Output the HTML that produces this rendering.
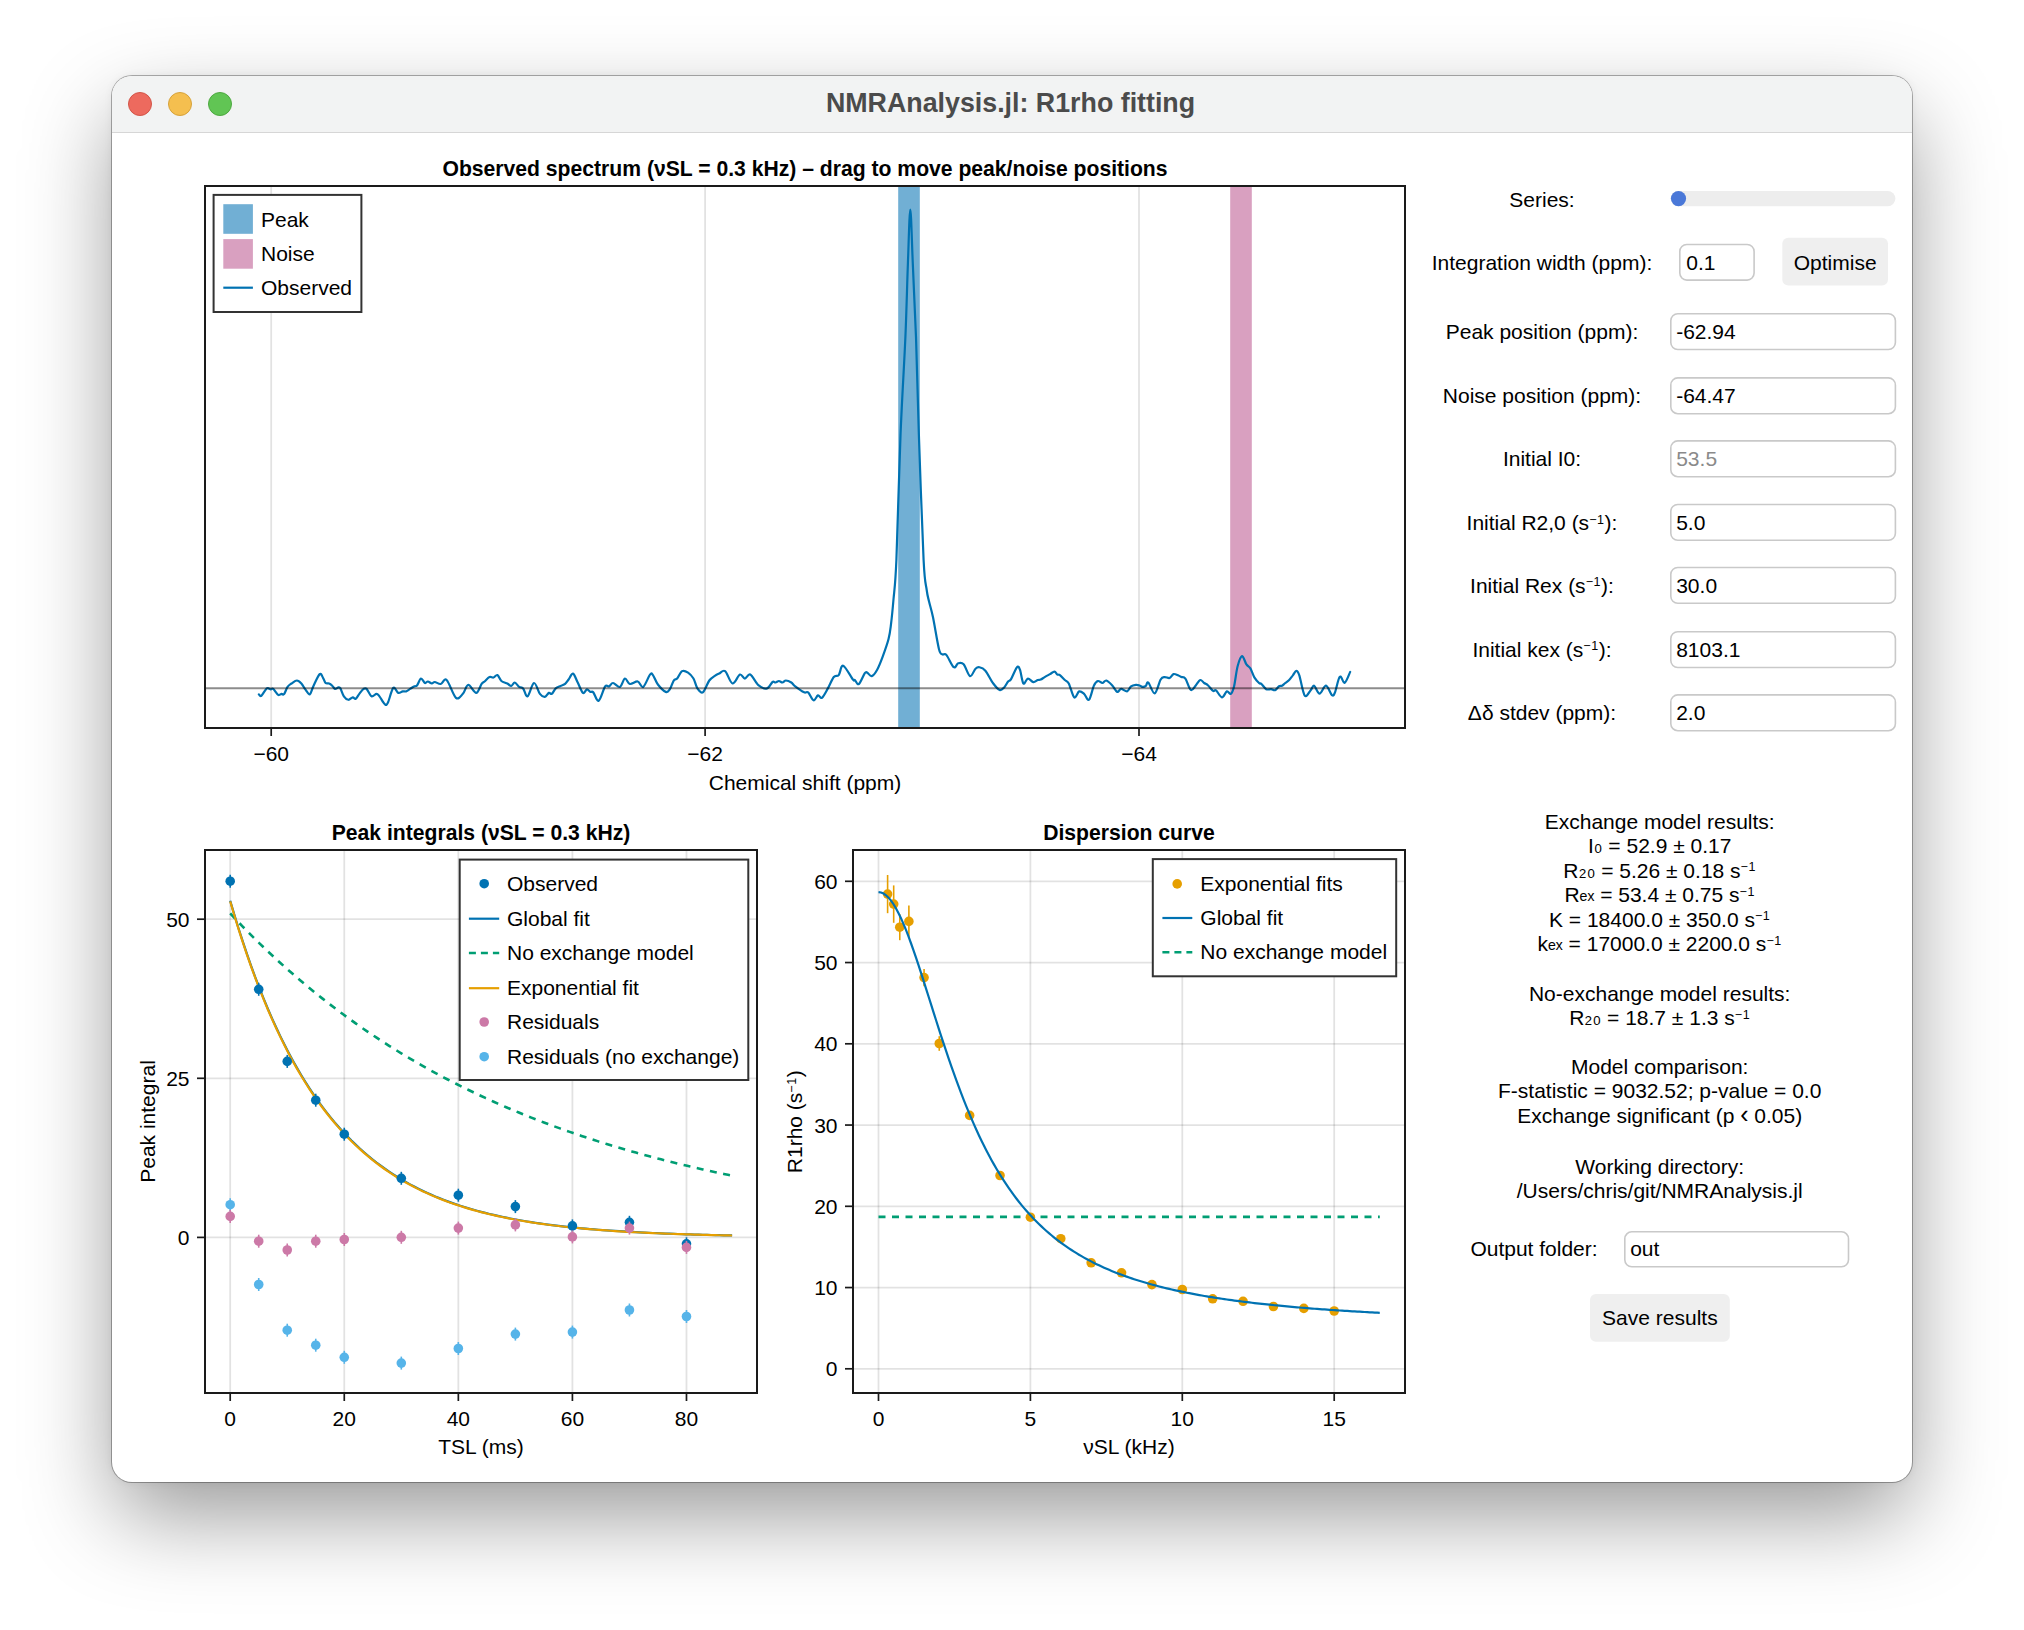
<!DOCTYPE html><html><head><meta charset="utf-8"><style>
html,body{margin:0;padding:0;background:#fff;}body{width:2024px;height:1630px;position:relative;overflow:hidden;font-family:"Liberation Sans", sans-serif;}
.win{position:absolute;left:112px;top:75.5px;width:1800px;height:1406.5px;border-radius:20px;background:#fff;box-shadow:0 0 0 1px rgba(0,0,0,0.30),0 36px 90px -4px rgba(0,0,0,0.41),0 0 10px rgba(0,0,0,0.06);overflow:hidden}
.tb{position:absolute;left:0;top:0;width:100%;height:57px;background:#f2f3f3;border-bottom:1px solid #d6d6d6;box-sizing:border-box}
.tl{position:absolute;top:16px;width:24px;height:24px;border-radius:50%;box-sizing:border-box}
svg{position:absolute;left:0;top:0}
</style></head><body>
<div class="win"><div class="tb">
<div class="tl" style="left:16px;background:#ed6a5e;border:1px solid #d25548"></div>
<div class="tl" style="left:56px;background:#f5bf4f;border:1px solid #d6a23b"></div>
<div class="tl" style="left:96px;background:#61c554;border:1px solid #4ea840"></div>
</div></div>
<svg width="2024" height="1630" viewBox="0 0 2024 1630" style="font-family:"Liberation Sans", sans-serif">
<text x="1010.5" y="111.8" text-anchor="middle" font-weight="bold" font-size="26.8" fill="#4b4b4b">NMRAnalysis.jl: R1rho fitting</text>
<text x="805" y="175.5" text-anchor="middle" font-weight="bold" font-size="21.15" fill="#000">Observed spectrum (νSL = 0.3 kHz) – drag to move peak/noise positions</text>
<line x1="271.2" y1="186" x2="271.2" y2="728" stroke="rgba(0,0,0,0.115)" stroke-width="1.8"/>
<line x1="705.1" y1="186" x2="705.1" y2="728" stroke="rgba(0,0,0,0.115)" stroke-width="1.8"/>
<line x1="1139" y1="186" x2="1139" y2="728" stroke="rgba(0,0,0,0.115)" stroke-width="1.8"/>
<rect x="898.2" y="186" width="21.6" height="542" fill="#71afd4"/>
<rect x="1230.2" y="186" width="21.6" height="542" fill="#d9a0c0"/>
<path d="M258.89 694.35 C259.31 694.59 260.05 696.82 261.36 695.83 C262.68 694.84 265.23 689.49 266.8 688.42 C268.36 687.35 269.68 689.32 270.75 689.41 C271.82 689.49 271.99 688.01 273.22 688.91 C274.46 689.82 276.76 694.02 278.16 694.84 C279.56 695.67 280.63 693.97 281.62 693.85 C282.61 693.74 283.1 695.3 284.09 694.15 C285.08 693 286.31 688.72 287.55 686.94 C288.78 685.16 289.94 684.55 291.5 683.48 C293.07 682.41 295.29 680.51 296.94 680.51 C298.58 680.51 299.98 682 301.38 683.48 C302.78 684.96 303.94 687.6 305.34 689.41 C306.74 691.22 308.47 694.84 309.78 694.35 C311.1 693.85 311.59 689.82 313.24 686.44 C314.89 683.07 318.02 675.49 319.66 674.09 C321.31 672.69 322.13 676.56 323.12 678.04 C324.11 679.53 324.6 682.08 325.59 682.98 C326.58 683.89 327.98 683.07 329.05 683.48 C330.12 683.89 331.03 684.55 332.02 685.45 C333 686.36 333.91 688.58 334.98 688.91 C336.05 689.24 337.53 687.51 338.44 687.43 C339.34 687.35 339.51 686.94 340.42 688.42 C341.32 689.9 342.56 694.43 343.87 696.32 C345.19 698.22 346.84 699.62 348.32 699.78 C349.8 699.95 351.53 697.48 352.77 697.31 C354 697.15 354.58 699.45 355.73 698.79 C356.88 698.14 358.37 695.01 359.68 693.36 C361 691.71 362.48 689.65 363.64 688.91 C364.79 688.17 365.28 687.68 366.6 688.91 C367.92 690.15 369.89 695.5 371.54 696.32 C373.19 697.15 375.16 693.85 376.48 693.85 C377.8 693.85 378.05 694.59 379.45 696.32 C380.85 698.05 383.48 703.16 384.88 704.23 C386.28 705.3 386.45 705.46 387.85 702.75 C389.25 700.03 391.55 689.57 393.28 687.92 C395.01 686.28 396.66 692.29 398.22 692.87 C399.79 693.44 401.35 691.63 402.67 691.38 C403.99 691.14 404.89 691.8 406.13 691.38 C407.36 690.97 408.76 689.74 410.08 688.91 C411.4 688.09 412.88 687.02 414.03 686.44 C415.18 685.87 415.84 686.77 417 685.45 C418.15 684.14 419.63 678.95 420.95 678.54 C422.27 678.13 423.75 682.49 424.9 682.98 C426.05 683.48 426.71 681.42 427.87 681.5 C429.02 681.58 430.67 683.4 431.82 683.48 C432.97 683.56 433.3 681.91 434.78 682 C436.26 682.08 438.74 684.3 440.71 683.97 C442.69 683.64 444.1 677.71 446.64 680.02 C449.18 682.33 453.23 695.5 455.93 697.81 C458.63 700.11 460.79 695.99 462.85 693.85 C464.9 691.71 466.06 685.13 468.28 684.96 C470.5 684.8 473.96 693.03 476.19 692.87 C478.41 692.7 480.22 685.87 481.62 683.97 C483.02 682.08 483.27 682.65 484.58 681.5 C485.9 680.35 488.04 677.71 489.53 677.06 C491.01 676.4 492.16 677.88 493.48 677.55 C494.8 677.22 496.11 674.5 497.43 675.08 C498.75 675.66 499.74 679.61 501.38 681.01 C503.03 682.41 505.67 682.65 507.31 683.48 C508.96 684.3 510.03 686.11 511.26 685.95 C512.5 685.78 513.41 682.33 514.72 682.49 C516.04 682.65 517.77 685.95 519.17 686.94 C520.57 687.92 521.72 686.85 523.12 688.42 C524.52 689.98 525.76 697.23 527.57 696.32 C529.38 695.42 531.93 683.4 533.99 682.98 C536.05 682.57 538.11 691.55 539.92 693.85 C541.73 696.16 543.38 696.98 544.86 696.82 C546.34 696.65 547.66 693.36 548.81 692.87 C549.97 692.37 550.63 694.59 551.78 693.85 C552.93 693.11 554.25 689.74 555.73 688.42 C557.21 687.1 559.11 686.69 560.67 685.95 C562.24 685.21 563.8 685.04 565.12 683.97 C566.44 682.9 567.26 681.25 568.58 679.53 C569.89 677.8 571.54 673.19 573.02 673.6 C574.51 674.01 575.82 678.78 577.47 682 C579.12 685.21 581.34 691.63 582.91 692.87 C584.47 694.1 585.62 689.57 586.86 689.41 C588.09 689.24 589.25 691.38 590.32 691.88 C591.39 692.37 591.88 690.89 593.28 692.37 C594.68 693.85 596.74 701.76 598.72 700.77 C600.69 699.78 603.41 688.83 605.14 686.44 C606.87 684.05 607.77 687.02 609.09 686.44 C610.41 685.87 611.23 682.9 613.04 682.98 C614.86 683.07 617.98 687.68 619.96 686.94 C621.94 686.2 623.25 679.03 624.9 678.54 C626.55 678.04 627.7 683.48 629.84 683.97 C631.98 684.47 635.52 681.01 637.75 681.5 C639.97 682 641.14 688.09 643.18 686.94 C645.22 685.78 648.37 676.56 650 674.58 C651.63 672.61 651.65 673.43 652.96 675.08 C654.28 676.73 655.76 681.67 657.91 684.47 C660.05 687.27 663.83 691.05 665.81 691.88 C667.79 692.7 668.45 691.3 669.76 689.41 C671.08 687.51 672.48 682.33 673.72 680.51 C674.95 678.7 675.77 680.1 677.17 678.54 C678.57 676.97 680.3 672.11 682.11 671.13 C683.93 670.14 686.15 671.37 688.04 672.61 C689.94 673.84 691.91 675.9 693.48 678.54 C695.04 681.17 695.87 686.11 697.43 688.42 C699 690.72 700.89 693.69 702.87 692.37 C704.84 691.05 707.23 683.31 709.29 680.51 C711.35 677.71 713.57 676.73 715.22 675.57 C716.86 674.42 717.52 674.34 719.17 673.6 C720.82 672.86 722.88 669.48 725.1 671.13 C727.32 672.77 730.04 682.9 732.51 683.48 C734.98 684.05 737.86 675.41 739.92 674.58 C741.98 673.76 743.13 678.54 744.86 678.54 C746.59 678.54 747.99 673.43 750.3 674.58 C752.6 675.74 755.9 683.15 758.7 685.45 C761.5 687.76 764.79 689 767.09 688.42 C769.4 687.84 771.13 682.98 772.53 682 C773.93 681.01 774.42 682.65 775.49 682.49 C776.56 682.33 777.8 681.01 778.95 681.01 C780.11 681.01 781.26 682.57 782.41 682.49 C783.56 682.41 784.39 680.51 785.87 680.51 C787.35 680.51 789.74 681.5 791.3 682.49 C792.87 683.48 793.12 684.8 795.26 686.44 C797.4 688.09 802.01 691.38 804.15 692.37 C806.29 693.36 806.54 691.05 808.1 692.37 C809.67 693.69 811.89 699.78 813.54 700.28 C815.18 700.77 816.58 695.75 817.98 695.34 C819.38 694.92 820.29 698.96 821.94 697.81 C823.58 696.65 825.89 691.88 827.87 688.42 C829.84 684.96 831.98 679.28 833.79 677.06 C835.61 674.83 837.17 676.97 838.74 675.08 C840.3 673.19 840.81 664.94 843.18 665.69 C845.55 666.44 851 677.17 852.96 679.57 C854.92 681.96 853.95 679.32 854.94 680.06 C855.93 680.8 857.25 685.16 858.89 684.01 C860.54 682.86 863.42 675.04 864.82 673.14 C866.22 671.25 866.14 672.15 867.29 672.65 C868.45 673.14 870.09 676.6 871.74 676.11 C873.39 675.61 875.36 672.9 877.17 669.68 C878.99 666.47 880.71 661.94 882.61 656.84 C884.5 651.73 887.14 644.49 888.54 639.05 C889.94 633.62 890.18 630.82 891.01 624.23 C891.83 617.64 892.58 610.23 893.48 599.53 C894.38 588.82 895.23 587.35 896.4 560 C897.57 532.65 899 472.57 900.5 435.4 C902 398.23 904.17 365.63 905.4 337 C906.63 308.37 907.08 284.83 907.9 263.6 C908.72 242.37 909.48 209.6 910.3 209.6 C911.12 209.6 911.85 242.37 912.8 263.6 C913.75 284.83 914.98 308.37 916 337 C917.02 365.63 917.63 398.23 918.9 435.4 C920.17 472.57 922.3 534.23 923.6 560 C924.9 585.77 925.79 583.08 926.7 590 C927.61 596.92 928 596.95 929.05 601.5 C930.1 606.05 931.36 609.41 933 617.31 C934.65 625.22 937.37 642.76 938.93 648.93 C940.5 655.11 941.16 653.38 942.39 654.37 C943.63 655.36 944.45 652.72 946.34 654.86 C948.24 657 951.78 665.81 953.75 667.21 C955.73 668.61 956.55 663.75 958.2 663.26 C959.85 662.77 961.66 662.11 963.64 664.25 C965.61 666.39 968.08 675.37 970.06 676.11 C972.04 676.85 973.93 670.18 975.49 668.7 C977.06 667.21 977.8 666.88 979.45 667.21 C981.09 667.54 983.07 667.95 985.38 670.67 C987.68 673.39 990.89 680.31 993.28 683.52 C995.67 686.73 997.89 689.28 999.7 689.94 C1001.52 690.6 1002.75 688.87 1004.15 687.47 C1005.55 686.07 1006.95 682.94 1008.1 681.54 C1009.26 680.14 1009.58 681.46 1011.07 679.07 C1012.55 676.68 1015.51 668.78 1017 667.21 C1018.48 665.65 1018.89 666.97 1019.96 669.68 C1021.03 672.4 1022.1 682.04 1023.42 683.52 C1024.74 685 1026.22 678.82 1027.87 678.58 C1029.51 678.33 1031.65 681.79 1033.3 682.04 C1034.95 682.28 1036.51 680.47 1037.75 680.06 C1038.98 679.65 1039.56 680.06 1040.71 679.57 C1041.86 679.07 1043.12 678.01 1044.66 677.09 C1046.21 676.18 1048.37 675 1050 674.09 C1051.63 673.18 1053.21 671.54 1054.45 671.62 C1055.68 671.7 1056.51 674.01 1057.41 674.58 C1058.32 675.16 1058.65 674.17 1059.88 675.08 C1061.12 675.98 1063.34 678.62 1064.82 680.02 C1066.3 681.42 1067.21 680.6 1068.77 683.48 C1070.34 686.36 1072.48 695.99 1074.21 697.31 C1075.94 698.63 1077.5 691.96 1079.15 691.38 C1080.8 690.81 1082.44 692.45 1084.09 693.85 C1085.74 695.25 1087.38 701.18 1089.03 699.78 C1090.68 698.38 1092.49 688.58 1093.97 685.45 C1095.45 682.33 1096.53 681.42 1097.92 681.01 C1099.32 680.6 1100.97 683.07 1102.37 682.98 C1103.77 682.9 1104.68 680.1 1106.32 680.51 C1107.97 680.93 1110.44 683.56 1112.25 685.45 C1114.06 687.35 1115.71 691.3 1117.19 691.88 C1118.68 692.45 1119.5 689 1121.15 688.91 C1122.79 688.83 1125.43 691.8 1127.08 691.38 C1128.72 690.97 1129.55 687.51 1131.03 686.44 C1132.51 685.37 1134.57 685.13 1135.97 684.96 C1137.37 684.8 1138.27 685.13 1139.43 685.45 C1140.58 685.78 1141.81 686.85 1142.89 686.94 C1143.96 687.02 1144.94 686.69 1145.85 685.95 C1146.76 685.21 1146.84 681.25 1148.32 682.49 C1149.8 683.73 1152.68 693.85 1154.74 693.36 C1156.8 692.87 1159.03 682.24 1160.67 679.53 C1162.32 676.81 1163.14 677.3 1164.62 677.06 C1166.11 676.81 1168.08 678.54 1169.57 678.04 C1171.05 677.55 1172.04 674.5 1173.52 674.09 C1175 673.68 1177.14 675.08 1178.46 675.57 C1179.78 676.07 1180.27 676.56 1181.42 677.06 C1182.58 677.55 1183.81 676.4 1185.38 678.54 C1186.94 680.68 1189.08 688.75 1190.81 689.9 C1192.54 691.05 1194.19 687.1 1195.75 685.45 C1197.32 683.81 1198.8 680.43 1200.2 680.02 C1201.6 679.61 1202.83 682.08 1204.15 682.98 C1205.47 683.89 1206.62 684.14 1208.1 685.45 C1209.58 686.77 1211.73 690.07 1213.04 690.89 C1214.36 691.71 1214.53 689.32 1216.01 690.4 C1217.49 691.47 1220.13 697.15 1221.94 697.31 C1223.75 697.48 1225.4 691.96 1226.88 691.38 C1228.36 690.81 1229.63 694.72 1230.83 693.85 C1232.03 692.99 1232.97 690.77 1234.09 686.21 C1235.21 681.64 1236.23 671.47 1237.55 666.44 C1238.87 661.42 1240.51 656.4 1242 656.07 C1243.48 655.74 1245.04 662.41 1246.44 664.47 C1247.84 666.53 1249.08 666.28 1250.4 668.42 C1251.71 670.56 1252.87 674.84 1254.35 677.31 C1255.83 679.78 1258.14 682.17 1259.29 683.24 C1260.44 684.31 1260.11 682.75 1261.26 683.74 C1262.42 684.72 1264.56 688.26 1266.21 689.17 C1267.85 690.08 1269.66 689.01 1271.15 689.17 C1272.63 689.33 1273.78 690.65 1275.1 690.16 C1276.42 689.66 1277.9 686.95 1279.05 686.21 C1280.2 685.46 1281.03 686.21 1282.02 685.71 C1283 685.22 1283.83 684.15 1284.98 683.24 C1286.13 682.34 1287.62 681.59 1288.93 680.28 C1290.25 678.96 1291.65 676.9 1292.89 675.34 C1294.12 673.77 1295.27 670.89 1296.34 670.89 C1297.41 670.89 1297.91 671.22 1299.31 675.34 C1300.71 679.45 1302.85 693.12 1304.74 695.59 C1306.64 698.06 1309.11 691.81 1310.67 690.16 C1312.24 688.51 1312.65 685.14 1314.13 685.71 C1315.61 686.29 1317.59 693.62 1319.57 693.62 C1321.54 693.62 1323.93 685.46 1325.99 685.71 C1328.05 685.96 1330.43 693.95 1331.92 695.1 C1333.4 696.25 1333.56 695.68 1334.88 692.63 C1336.2 689.58 1338.18 678.47 1339.82 676.82 C1341.47 675.17 1343.03 683.57 1344.76 682.75 C1346.49 681.92 1349.29 673.69 1350.2 671.88" fill="none" stroke="#0072b2" stroke-width="2.2" stroke-linejoin="round" stroke-linecap="round"/>
<line x1="205" y1="688.3" x2="1405" y2="688.3" stroke="rgba(0,0,0,0.45)" stroke-width="2.1"/>
<rect x="205" y="186" width="1200" height="542" fill="none" stroke="#1a1a1a" stroke-width="2"/>
<line x1="271.2" y1="728" x2="271.2" y2="736" stroke="#1a1a1a" stroke-width="1.7"/>
<text x="271.2" y="760.7" text-anchor="middle" font-size="21">−60</text>
<line x1="705.1" y1="728" x2="705.1" y2="736" stroke="#1a1a1a" stroke-width="1.7"/>
<text x="705.1" y="760.7" text-anchor="middle" font-size="21">−62</text>
<line x1="1139" y1="728" x2="1139" y2="736" stroke="#1a1a1a" stroke-width="1.7"/>
<text x="1139" y="760.7" text-anchor="middle" font-size="21">−64</text>
<text x="805" y="789.9" text-anchor="middle" font-size="21">Chemical shift (ppm)</text>
<rect x="213.6" y="194.9" width="147.8" height="117.1" fill="#fff" stroke="#333" stroke-width="2"/>
<rect x="223.3" y="204.2" width="29.6" height="29.6" fill="#71afd4"/>
<rect x="223.3" y="239.1" width="29.6" height="29.6" fill="#d9a0c0"/>
<line x1="223.3" y1="287.7" x2="252.9" y2="287.7" stroke="#0072b2" stroke-width="2.2"/>
<text x="261" y="226.5" font-size="21">Peak</text>
<text x="261" y="261.1" font-size="21">Noise</text>
<text x="261" y="295" font-size="21">Observed</text>
<text x="481" y="840" text-anchor="middle" font-weight="bold" font-size="21.15">Peak integrals (νSL = 0.3 kHz)</text>
<line x1="230.2" y1="850" x2="230.2" y2="1393" stroke="rgba(0,0,0,0.115)" stroke-width="1.8"/>
<line x1="344.27" y1="850" x2="344.27" y2="1393" stroke="rgba(0,0,0,0.115)" stroke-width="1.8"/>
<line x1="458.34" y1="850" x2="458.34" y2="1393" stroke="rgba(0,0,0,0.115)" stroke-width="1.8"/>
<line x1="572.41" y1="850" x2="572.41" y2="1393" stroke="rgba(0,0,0,0.115)" stroke-width="1.8"/>
<line x1="686.48" y1="850" x2="686.48" y2="1393" stroke="rgba(0,0,0,0.115)" stroke-width="1.8"/>
<line x1="205" y1="1237.4" x2="757" y2="1237.4" stroke="rgba(0,0,0,0.115)" stroke-width="1.8"/>
<line x1="205" y1="1078.3" x2="757" y2="1078.3" stroke="rgba(0,0,0,0.115)" stroke-width="1.8"/>
<line x1="205" y1="919.2" x2="757" y2="919.2" stroke="rgba(0,0,0,0.115)" stroke-width="1.8"/>
<path d="M230.2 913.47 L234.38 917.92 L238.57 922.3 L242.75 926.62 L246.93 930.89 L251.11 935.09 L255.3 939.24 L259.48 943.33 L263.66 947.37 L267.84 951.35 L272.03 955.27 L276.21 959.14 L280.39 962.96 L284.57 966.73 L288.76 970.44 L292.94 974.1 L297.12 977.72 L301.3 981.28 L305.49 984.79 L309.67 988.26 L313.85 991.68 L318.03 995.05 L322.22 998.38 L326.4 1001.65 L330.58 1004.89 L334.76 1008.08 L338.95 1011.23 L343.13 1014.33 L347.31 1017.39 L351.49 1020.41 L355.68 1023.39 L359.86 1026.32 L364.04 1029.22 L368.22 1032.08 L372.41 1034.89 L376.59 1037.67 L380.77 1040.41 L384.95 1043.11 L389.14 1045.78 L393.32 1048.41 L397.5 1051 L401.69 1053.56 L405.87 1056.08 L410.05 1058.57 L414.23 1061.02 L418.42 1063.44 L422.6 1065.83 L426.78 1068.19 L430.96 1070.51 L435.15 1072.8 L439.33 1075.06 L443.51 1077.28 L447.69 1079.48 L451.88 1081.65 L456.06 1083.78 L460.24 1085.89 L464.42 1087.97 L468.61 1090.02 L472.79 1092.04 L476.97 1094.04 L481.15 1096 L485.34 1097.94 L489.52 1099.86 L493.7 1101.75 L497.88 1103.61 L502.07 1105.44 L506.25 1107.25 L510.43 1109.04 L514.61 1110.8 L518.8 1112.54 L522.98 1114.25 L527.16 1115.94 L531.34 1117.61 L535.53 1119.25 L539.71 1120.87 L543.89 1122.47 L548.08 1124.05 L552.26 1125.6 L556.44 1127.14 L560.62 1128.65 L564.81 1130.14 L568.99 1131.61 L573.17 1133.06 L577.35 1134.5 L581.54 1135.91 L585.72 1137.3 L589.9 1138.67 L594.08 1140.03 L598.27 1141.37 L602.45 1142.68 L606.63 1143.98 L610.81 1145.26 L615 1146.53 L619.18 1147.78 L623.36 1149 L627.54 1150.22 L631.73 1151.41 L635.91 1152.59 L640.09 1153.76 L644.27 1154.91 L648.46 1156.04 L652.64 1157.15 L656.82 1158.25 L661 1159.34 L665.19 1160.41 L669.37 1161.47 L673.55 1162.51 L677.73 1163.54 L681.92 1164.55 L686.1 1165.55 L690.28 1166.54 L694.46 1167.51 L698.65 1168.47 L702.83 1169.41 L707.01 1170.35 L711.2 1171.27 L715.38 1172.17 L719.56 1173.07 L723.74 1173.95 L727.93 1174.82 L732.11 1175.68" fill="none" stroke="#009e73" stroke-width="2.6" stroke-dasharray="7 6.5"/>
<path d="M230.2 900.74 L234.38 914.91 L238.57 928.47 L242.75 941.46 L246.93 953.91 L251.11 965.84 L255.3 977.26 L259.48 988.2 L263.66 998.68 L267.84 1008.73 L272.03 1018.34 L276.21 1027.56 L280.39 1036.38 L284.57 1044.84 L288.76 1052.94 L292.94 1060.7 L297.12 1068.13 L301.3 1075.25 L305.49 1082.07 L309.67 1088.61 L313.85 1094.86 L318.03 1100.86 L322.22 1106.6 L326.4 1112.1 L330.58 1117.37 L334.76 1122.42 L338.95 1127.26 L343.13 1131.89 L347.31 1136.33 L351.49 1140.58 L355.68 1144.65 L359.86 1148.56 L364.04 1152.29 L368.22 1155.87 L372.41 1159.3 L376.59 1162.59 L380.77 1165.73 L384.95 1168.75 L389.14 1171.64 L393.32 1174.4 L397.5 1177.05 L401.69 1179.59 L405.87 1182.02 L410.05 1184.35 L414.23 1186.58 L418.42 1188.72 L422.6 1190.77 L426.78 1192.73 L430.96 1194.61 L435.15 1196.41 L439.33 1198.13 L443.51 1199.78 L447.69 1201.37 L451.88 1202.88 L456.06 1204.33 L460.24 1205.73 L464.42 1207.06 L468.61 1208.33 L472.79 1209.56 L476.97 1210.73 L481.15 1211.85 L485.34 1212.92 L489.52 1213.95 L493.7 1214.94 L497.88 1215.88 L502.07 1216.79 L506.25 1217.66 L510.43 1218.49 L514.61 1219.28 L518.8 1220.04 L522.98 1220.77 L527.16 1221.47 L531.34 1222.14 L535.53 1222.79 L539.71 1223.4 L543.89 1223.99 L548.08 1224.55 L552.26 1225.09 L556.44 1225.61 L560.62 1226.11 L564.81 1226.58 L568.99 1227.04 L573.17 1227.47 L577.35 1227.89 L581.54 1228.29 L585.72 1228.67 L589.9 1229.04 L594.08 1229.39 L598.27 1229.73 L602.45 1230.05 L606.63 1230.36 L610.81 1230.66 L615 1230.94 L619.18 1231.21 L623.36 1231.47 L627.54 1231.72 L631.73 1231.96 L635.91 1232.19 L640.09 1232.41 L644.27 1232.62 L648.46 1232.82 L652.64 1233.01 L656.82 1233.2 L661 1233.37 L665.19 1233.54 L669.37 1233.71 L673.55 1233.86 L677.73 1234.01 L681.92 1234.15 L686.1 1234.29 L690.28 1234.42 L694.46 1234.55 L698.65 1234.67 L702.83 1234.78 L707.01 1234.89 L711.2 1235 L715.38 1235.1 L719.56 1235.19 L723.74 1235.29 L727.93 1235.38 L732.11 1235.46" fill="none" stroke="#0072b2" stroke-width="2.2"/>
<path d="M230.2 901.38 L234.38 915.56 L238.57 929.14 L242.75 942.15 L246.93 954.61 L251.11 966.55 L255.3 977.98 L259.48 988.93 L263.66 999.41 L267.84 1009.46 L272.03 1019.08 L276.21 1028.29 L280.39 1037.12 L284.57 1045.57 L288.76 1053.67 L292.94 1061.42 L297.12 1068.85 L301.3 1075.96 L305.49 1082.77 L309.67 1089.3 L313.85 1095.55 L318.03 1101.54 L322.22 1107.27 L326.4 1112.76 L330.58 1118.02 L334.76 1123.06 L338.95 1127.89 L343.13 1132.51 L347.31 1136.94 L351.49 1141.18 L355.68 1145.24 L359.86 1149.13 L364.04 1152.85 L368.22 1156.42 L372.41 1159.84 L376.59 1163.11 L380.77 1166.25 L384.95 1169.25 L389.14 1172.13 L393.32 1174.88 L397.5 1177.52 L401.69 1180.05 L405.87 1182.47 L410.05 1184.78 L414.23 1187.01 L418.42 1189.13 L422.6 1191.17 L426.78 1193.12 L430.96 1194.99 L435.15 1196.78 L439.33 1198.49 L443.51 1200.14 L447.69 1201.71 L451.88 1203.21 L456.06 1204.66 L460.24 1206.04 L464.42 1207.36 L468.61 1208.63 L472.79 1209.84 L476.97 1211.01 L481.15 1212.12 L485.34 1213.19 L489.52 1214.21 L493.7 1215.19 L497.88 1216.13 L502.07 1217.02 L506.25 1217.88 L510.43 1218.71 L514.61 1219.5 L518.8 1220.25 L522.98 1220.98 L527.16 1221.67 L531.34 1222.33 L535.53 1222.97 L539.71 1223.58 L543.89 1224.16 L548.08 1224.72 L552.26 1225.25 L556.44 1225.77 L560.62 1226.26 L564.81 1226.73 L568.99 1227.18 L573.17 1227.61 L577.35 1228.02 L581.54 1228.42 L585.72 1228.8 L589.9 1229.16 L594.08 1229.51 L598.27 1229.84 L602.45 1230.16 L606.63 1230.47 L610.81 1230.76 L615 1231.04 L619.18 1231.31 L623.36 1231.56 L627.54 1231.81 L631.73 1232.05 L635.91 1232.27 L640.09 1232.49 L644.27 1232.7 L648.46 1232.9 L652.64 1233.09 L656.82 1233.27 L661 1233.44 L665.19 1233.61 L669.37 1233.77 L673.55 1233.92 L677.73 1234.07 L681.92 1234.21 L686.1 1234.34 L690.28 1234.47 L694.46 1234.6 L698.65 1234.71 L702.83 1234.83 L707.01 1234.94 L711.2 1235.04 L715.38 1235.14 L719.56 1235.24 L723.74 1235.33 L727.93 1235.41 L732.11 1235.5" fill="none" stroke="#e69f00" stroke-width="2.2"/>
<line x1="230.2" y1="874.7" x2="230.2" y2="887.7" stroke="#0072b2" stroke-width="1.6"/>
<circle cx="230.2" cy="881.2" r="4.8" fill="#0072b2"/>
<line x1="258.72" y1="982.8" x2="258.72" y2="995.8" stroke="#0072b2" stroke-width="1.6"/>
<circle cx="258.72" cy="989.3" r="4.8" fill="#0072b2"/>
<line x1="287.24" y1="1054.9" x2="287.24" y2="1067.9" stroke="#0072b2" stroke-width="1.6"/>
<circle cx="287.24" cy="1061.4" r="4.8" fill="#0072b2"/>
<line x1="315.75" y1="1093.7" x2="315.75" y2="1106.7" stroke="#0072b2" stroke-width="1.6"/>
<circle cx="315.75" cy="1100.2" r="4.8" fill="#0072b2"/>
<line x1="344.27" y1="1127.7" x2="344.27" y2="1140.7" stroke="#0072b2" stroke-width="1.6"/>
<circle cx="344.27" cy="1134.2" r="4.8" fill="#0072b2"/>
<line x1="401.3" y1="1171.8" x2="401.3" y2="1184.8" stroke="#0072b2" stroke-width="1.6"/>
<circle cx="401.3" cy="1178.3" r="4.8" fill="#0072b2"/>
<line x1="458.34" y1="1188.7" x2="458.34" y2="1201.7" stroke="#0072b2" stroke-width="1.6"/>
<circle cx="458.34" cy="1195.2" r="4.8" fill="#0072b2"/>
<line x1="515.38" y1="1200.1" x2="515.38" y2="1213.1" stroke="#0072b2" stroke-width="1.6"/>
<circle cx="515.38" cy="1206.6" r="4.8" fill="#0072b2"/>
<line x1="572.41" y1="1219.4" x2="572.41" y2="1232.4" stroke="#0072b2" stroke-width="1.6"/>
<circle cx="572.41" cy="1225.9" r="4.8" fill="#0072b2"/>
<line x1="629.44" y1="1215.8" x2="629.44" y2="1228.8" stroke="#0072b2" stroke-width="1.6"/>
<circle cx="629.44" cy="1222.3" r="4.8" fill="#0072b2"/>
<line x1="686.48" y1="1237.3" x2="686.48" y2="1250.3" stroke="#0072b2" stroke-width="1.6"/>
<circle cx="686.48" cy="1243.8" r="4.8" fill="#0072b2"/>
<line x1="230.2" y1="1198.2" x2="230.2" y2="1211.2" stroke="#56b4e9" stroke-width="1.6"/>
<circle cx="230.2" cy="1204.7" r="4.8" fill="#56b4e9"/>
<line x1="258.72" y1="1278" x2="258.72" y2="1291" stroke="#56b4e9" stroke-width="1.6"/>
<circle cx="258.72" cy="1284.5" r="4.8" fill="#56b4e9"/>
<line x1="287.24" y1="1323.7" x2="287.24" y2="1336.7" stroke="#56b4e9" stroke-width="1.6"/>
<circle cx="287.24" cy="1330.2" r="4.8" fill="#56b4e9"/>
<line x1="315.75" y1="1338.7" x2="315.75" y2="1351.7" stroke="#56b4e9" stroke-width="1.6"/>
<circle cx="315.75" cy="1345.2" r="4.8" fill="#56b4e9"/>
<line x1="344.27" y1="1350.8" x2="344.27" y2="1363.8" stroke="#56b4e9" stroke-width="1.6"/>
<circle cx="344.27" cy="1357.3" r="4.8" fill="#56b4e9"/>
<line x1="401.3" y1="1356.6" x2="401.3" y2="1369.6" stroke="#56b4e9" stroke-width="1.6"/>
<circle cx="401.3" cy="1363.1" r="4.8" fill="#56b4e9"/>
<line x1="458.34" y1="1342" x2="458.34" y2="1355" stroke="#56b4e9" stroke-width="1.6"/>
<circle cx="458.34" cy="1348.5" r="4.8" fill="#56b4e9"/>
<line x1="515.38" y1="1327.6" x2="515.38" y2="1340.6" stroke="#56b4e9" stroke-width="1.6"/>
<circle cx="515.38" cy="1334.1" r="4.8" fill="#56b4e9"/>
<line x1="572.41" y1="1325.6" x2="572.41" y2="1338.6" stroke="#56b4e9" stroke-width="1.6"/>
<circle cx="572.41" cy="1332.1" r="4.8" fill="#56b4e9"/>
<line x1="629.44" y1="1303.5" x2="629.44" y2="1316.5" stroke="#56b4e9" stroke-width="1.6"/>
<circle cx="629.44" cy="1310" r="4.8" fill="#56b4e9"/>
<line x1="686.48" y1="1310" x2="686.48" y2="1323" stroke="#56b4e9" stroke-width="1.6"/>
<circle cx="686.48" cy="1316.5" r="4.8" fill="#56b4e9"/>
<line x1="230.2" y1="1209.9" x2="230.2" y2="1222.9" stroke="#cc79a7" stroke-width="1.6"/>
<circle cx="230.2" cy="1216.4" r="4.8" fill="#cc79a7"/>
<line x1="258.72" y1="1234.7" x2="258.72" y2="1247.7" stroke="#cc79a7" stroke-width="1.6"/>
<circle cx="258.72" cy="1241.2" r="4.8" fill="#cc79a7"/>
<line x1="287.24" y1="1243.5" x2="287.24" y2="1256.5" stroke="#cc79a7" stroke-width="1.6"/>
<circle cx="287.24" cy="1250" r="4.8" fill="#cc79a7"/>
<line x1="315.75" y1="1234.7" x2="315.75" y2="1247.7" stroke="#cc79a7" stroke-width="1.6"/>
<circle cx="315.75" cy="1241.2" r="4.8" fill="#cc79a7"/>
<line x1="344.27" y1="1233" x2="344.27" y2="1246" stroke="#cc79a7" stroke-width="1.6"/>
<circle cx="344.27" cy="1239.5" r="4.8" fill="#cc79a7"/>
<line x1="401.3" y1="1230.8" x2="401.3" y2="1243.8" stroke="#cc79a7" stroke-width="1.6"/>
<circle cx="401.3" cy="1237.3" r="4.8" fill="#cc79a7"/>
<line x1="458.34" y1="1221.6" x2="458.34" y2="1234.6" stroke="#cc79a7" stroke-width="1.6"/>
<circle cx="458.34" cy="1228.1" r="4.8" fill="#cc79a7"/>
<line x1="515.38" y1="1218.4" x2="515.38" y2="1231.4" stroke="#cc79a7" stroke-width="1.6"/>
<circle cx="515.38" cy="1224.9" r="4.8" fill="#cc79a7"/>
<line x1="572.41" y1="1230.4" x2="572.41" y2="1243.4" stroke="#cc79a7" stroke-width="1.6"/>
<circle cx="572.41" cy="1236.9" r="4.8" fill="#cc79a7"/>
<line x1="629.44" y1="1221.6" x2="629.44" y2="1234.6" stroke="#cc79a7" stroke-width="1.6"/>
<circle cx="629.44" cy="1228.1" r="4.8" fill="#cc79a7"/>
<line x1="686.48" y1="1240.9" x2="686.48" y2="1253.9" stroke="#cc79a7" stroke-width="1.6"/>
<circle cx="686.48" cy="1247.4" r="4.8" fill="#cc79a7"/>
<rect x="205" y="850" width="552" height="543" fill="none" stroke="#1a1a1a" stroke-width="2"/>
<line x1="197" y1="1237.4" x2="205" y2="1237.4" stroke="#1a1a1a" stroke-width="1.7"/>
<text x="189.5" y="1244.9" text-anchor="end" font-size="21">0</text>
<line x1="197" y1="1078.3" x2="205" y2="1078.3" stroke="#1a1a1a" stroke-width="1.7"/>
<text x="189.5" y="1085.8" text-anchor="end" font-size="21">25</text>
<line x1="197" y1="919.2" x2="205" y2="919.2" stroke="#1a1a1a" stroke-width="1.7"/>
<text x="189.5" y="926.7" text-anchor="end" font-size="21">50</text>
<line x1="230.2" y1="1393" x2="230.2" y2="1401" stroke="#1a1a1a" stroke-width="1.7"/>
<text x="230.2" y="1425.5" text-anchor="middle" font-size="21">0</text>
<line x1="344.27" y1="1393" x2="344.27" y2="1401" stroke="#1a1a1a" stroke-width="1.7"/>
<text x="344.27" y="1425.5" text-anchor="middle" font-size="21">20</text>
<line x1="458.34" y1="1393" x2="458.34" y2="1401" stroke="#1a1a1a" stroke-width="1.7"/>
<text x="458.34" y="1425.5" text-anchor="middle" font-size="21">40</text>
<line x1="572.41" y1="1393" x2="572.41" y2="1401" stroke="#1a1a1a" stroke-width="1.7"/>
<text x="572.41" y="1425.5" text-anchor="middle" font-size="21">60</text>
<line x1="686.48" y1="1393" x2="686.48" y2="1401" stroke="#1a1a1a" stroke-width="1.7"/>
<text x="686.48" y="1425.5" text-anchor="middle" font-size="21">80</text>
<text x="481" y="1454.2" text-anchor="middle" font-size="21">TSL (ms)</text>
<text transform="translate(154.9 1121.5) rotate(-90)" text-anchor="middle" font-size="21">Peak integral</text>
<rect x="459.7" y="859.6" width="288.6" height="220.4" fill="#fff" stroke="#333" stroke-width="2"/>
<circle cx="484.2" cy="883.7" r="4.8" fill="#0072b2"/>
<line x1="468.9" y1="918.7" x2="499.2" y2="918.7" stroke="#0072b2" stroke-width="2.2"/>
<line x1="468.9" y1="953" x2="499.2" y2="953" stroke="#009e73" stroke-width="2.6" stroke-dasharray="7 5"/>
<line x1="468.9" y1="988.2" x2="499.2" y2="988.2" stroke="#e69f00" stroke-width="2.2"/>
<circle cx="484.2" cy="1022" r="4.8" fill="#cc79a7"/>
<circle cx="484.2" cy="1056.7" r="4.8" fill="#56b4e9"/>
<text x="507" y="890.5" font-size="21">Observed</text>
<text x="507" y="925.7" font-size="21">Global fit</text>
<text x="507" y="960" font-size="21">No exchange model</text>
<text x="507" y="995.2" font-size="21">Exponential fit</text>
<text x="507" y="1029" font-size="21">Residuals</text>
<text x="507" y="1063.7" font-size="21">Residuals (no exchange)</text>
<text x="1129" y="840" text-anchor="middle" font-weight="bold" font-size="21.15">Dispersion curve</text>
<line x1="878.5" y1="850" x2="878.5" y2="1393" stroke="rgba(0,0,0,0.115)" stroke-width="1.8"/>
<line x1="1030.4" y1="850" x2="1030.4" y2="1393" stroke="rgba(0,0,0,0.115)" stroke-width="1.8"/>
<line x1="1182.3" y1="850" x2="1182.3" y2="1393" stroke="rgba(0,0,0,0.115)" stroke-width="1.8"/>
<line x1="1334.2" y1="850" x2="1334.2" y2="1393" stroke="rgba(0,0,0,0.115)" stroke-width="1.8"/>
<line x1="853" y1="1368.8" x2="1405" y2="1368.8" stroke="rgba(0,0,0,0.115)" stroke-width="1.8"/>
<line x1="853" y1="1287.55" x2="1405" y2="1287.55" stroke="rgba(0,0,0,0.115)" stroke-width="1.8"/>
<line x1="853" y1="1206.3" x2="1405" y2="1206.3" stroke="rgba(0,0,0,0.115)" stroke-width="1.8"/>
<line x1="853" y1="1125.05" x2="1405" y2="1125.05" stroke="rgba(0,0,0,0.115)" stroke-width="1.8"/>
<line x1="853" y1="1043.8" x2="1405" y2="1043.8" stroke="rgba(0,0,0,0.115)" stroke-width="1.8"/>
<line x1="853" y1="962.55" x2="1405" y2="962.55" stroke="rgba(0,0,0,0.115)" stroke-width="1.8"/>
<line x1="853" y1="881.3" x2="1405" y2="881.3" stroke="rgba(0,0,0,0.115)" stroke-width="1.8"/>
<line x1="878.5" y1="1216.86" x2="1379.77" y2="1216.86" stroke="#009e73" stroke-width="2.6" stroke-dasharray="7 6.5"/>
<line x1="887.61" y1="875.01" x2="887.61" y2="913.19" stroke="#e69f00" stroke-width="1.6"/>
<line x1="893.69" y1="885.41" x2="893.69" y2="922.79" stroke="#e69f00" stroke-width="1.6"/>
<line x1="899.77" y1="914.2" x2="899.77" y2="940.2" stroke="#e69f00" stroke-width="1.6"/>
<line x1="908.88" y1="905.56" x2="908.88" y2="937.24" stroke="#e69f00" stroke-width="1.6"/>
<line x1="924.07" y1="969.07" x2="924.07" y2="986.13" stroke="#e69f00" stroke-width="1.6"/>
<line x1="939.26" y1="1036.19" x2="939.26" y2="1050.81" stroke="#e69f00" stroke-width="1.6"/>
<line x1="969.64" y1="1112.15" x2="969.64" y2="1118.65" stroke="#e69f00" stroke-width="1.6"/>
<line x1="1000.02" y1="1173.06" x2="1000.02" y2="1177.94" stroke="#e69f00" stroke-width="1.6"/>
<line x1="1030.4" y1="1214.76" x2="1030.4" y2="1219.64" stroke="#e69f00" stroke-width="1.6"/>
<line x1="1060.78" y1="1236.26" x2="1060.78" y2="1241.14" stroke="#e69f00" stroke-width="1.6"/>
<line x1="1091.16" y1="1260.36" x2="1091.16" y2="1265.24" stroke="#e69f00" stroke-width="1.6"/>
<circle cx="887.61" cy="894.1" r="4.8" fill="#e69f00"/>
<circle cx="893.69" cy="904.1" r="4.8" fill="#e69f00"/>
<circle cx="899.77" cy="927.2" r="4.8" fill="#e69f00"/>
<circle cx="908.88" cy="921.4" r="4.8" fill="#e69f00"/>
<circle cx="924.07" cy="977.6" r="4.8" fill="#e69f00"/>
<circle cx="939.26" cy="1043.5" r="4.8" fill="#e69f00"/>
<circle cx="969.64" cy="1115.4" r="4.8" fill="#e69f00"/>
<circle cx="1000.02" cy="1175.5" r="4.8" fill="#e69f00"/>
<circle cx="1030.4" cy="1217.2" r="4.8" fill="#e69f00"/>
<circle cx="1060.78" cy="1238.7" r="4.8" fill="#e69f00"/>
<circle cx="1091.16" cy="1262.8" r="4.8" fill="#e69f00"/>
<circle cx="1121.54" cy="1272.8" r="4.8" fill="#e69f00"/>
<circle cx="1151.92" cy="1284.6" r="4.8" fill="#e69f00"/>
<circle cx="1182.3" cy="1289.5" r="4.8" fill="#e69f00"/>
<circle cx="1212.68" cy="1298.8" r="4.8" fill="#e69f00"/>
<circle cx="1243.06" cy="1301.3" r="4.8" fill="#e69f00"/>
<circle cx="1273.44" cy="1306.5" r="4.8" fill="#e69f00"/>
<circle cx="1303.82" cy="1308.4" r="4.8" fill="#e69f00"/>
<circle cx="1334.2" cy="1311" r="4.8" fill="#e69f00"/>
<path d="M878.5 892.19 L881.01 892.53 L883.51 893.56 L886.02 895.26 L888.53 897.63 L891.03 900.63 L893.54 904.24 L896.04 908.43 L898.55 913.16 L901.06 918.39 L903.56 924.09 L906.07 930.2 L908.58 936.69 L911.08 943.5 L913.59 950.59 L916.1 957.93 L918.6 965.45 L921.11 973.14 L923.61 980.94 L926.12 988.81 L928.63 996.74 L931.13 1004.67 L933.64 1012.6 L936.15 1020.48 L938.65 1028.31 L941.16 1036.05 L943.67 1043.69 L946.17 1051.21 L948.68 1058.61 L951.18 1065.86 L953.69 1072.97 L956.2 1079.92 L958.7 1086.71 L961.21 1093.33 L963.72 1099.79 L966.22 1106.07 L968.73 1112.18 L971.23 1118.12 L973.74 1123.89 L976.25 1129.49 L978.75 1134.92 L981.26 1140.18 L983.77 1145.28 L986.27 1150.22 L988.78 1155.01 L991.29 1159.65 L993.79 1164.13 L996.3 1168.47 L998.8 1172.67 L1001.31 1176.74 L1003.82 1180.67 L1006.32 1184.47 L1008.83 1188.15 L1011.34 1191.71 L1013.84 1195.15 L1016.35 1198.48 L1018.86 1201.7 L1021.36 1204.82 L1023.87 1207.84 L1026.37 1210.75 L1028.88 1213.58 L1031.39 1216.31 L1033.89 1218.95 L1036.4 1221.51 L1038.91 1223.99 L1041.41 1226.39 L1043.92 1228.72 L1046.43 1230.97 L1048.93 1233.15 L1051.44 1235.27 L1053.94 1237.32 L1056.45 1239.3 L1058.96 1241.23 L1061.46 1243.09 L1063.97 1244.9 L1066.48 1246.66 L1068.98 1248.36 L1071.49 1250.02 L1074 1251.62 L1076.5 1253.18 L1079.01 1254.69 L1081.51 1256.16 L1084.02 1257.59 L1086.53 1258.98 L1089.03 1260.32 L1091.54 1261.63 L1094.05 1262.91 L1096.55 1264.14 L1099.06 1265.35 L1101.57 1266.52 L1104.07 1267.66 L1106.58 1268.76 L1109.08 1269.84 L1111.59 1270.89 L1114.1 1271.91 L1116.6 1272.91 L1119.11 1273.88 L1121.62 1274.82 L1124.12 1275.74 L1126.63 1276.64 L1129.13 1277.51 L1131.64 1278.36 L1134.15 1279.19 L1136.65 1280 L1139.16 1280.79 L1141.67 1281.56 L1144.17 1282.31 L1146.68 1283.05 L1149.19 1283.76 L1151.69 1284.46 L1154.2 1285.14 L1156.7 1285.81 L1159.21 1286.46 L1161.72 1287.09 L1164.22 1287.72 L1166.73 1288.32 L1169.24 1288.91 L1171.74 1289.49 L1174.25 1290.06 L1176.76 1290.61 L1179.26 1291.15 L1181.77 1291.68 L1184.27 1292.2 L1186.78 1292.71 L1189.29 1293.2 L1191.79 1293.69 L1194.3 1294.16 L1196.81 1294.62 L1199.31 1295.08 L1201.82 1295.52 L1204.33 1295.96 L1206.83 1296.39 L1209.34 1296.8 L1211.84 1297.21 L1214.35 1297.61 L1216.86 1298.01 L1219.36 1298.39 L1221.87 1298.77 L1224.38 1299.14 L1226.88 1299.5 L1229.39 1299.86 L1231.9 1300.2 L1234.4 1300.55 L1236.91 1300.88 L1239.41 1301.21 L1241.92 1301.53 L1244.43 1301.85 L1246.93 1302.16 L1249.44 1302.46 L1251.95 1302.76 L1254.45 1303.05 L1256.96 1303.34 L1259.47 1303.62 L1261.97 1303.9 L1264.48 1304.17 L1266.98 1304.44 L1269.49 1304.7 L1272 1304.96 L1274.5 1305.22 L1277.01 1305.46 L1279.52 1305.71 L1282.02 1305.95 L1284.53 1306.19 L1287.04 1306.42 L1289.54 1306.65 L1292.05 1306.87 L1294.55 1307.09 L1297.06 1307.31 L1299.57 1307.52 L1302.07 1307.73 L1304.58 1307.94 L1307.09 1308.14 L1309.59 1308.34 L1312.1 1308.53 L1314.6 1308.73 L1317.11 1308.92 L1319.62 1309.1 L1322.12 1309.29 L1324.63 1309.47 L1327.14 1309.65 L1329.64 1309.82 L1332.15 1309.99 L1334.66 1310.16 L1337.16 1310.33 L1339.67 1310.49 L1342.17 1310.66 L1344.68 1310.82 L1347.19 1310.97 L1349.69 1311.13 L1352.2 1311.28 L1354.71 1311.43 L1357.21 1311.58 L1359.72 1311.72 L1362.23 1311.87 L1364.73 1312.01 L1367.24 1312.15 L1369.74 1312.28 L1372.25 1312.42 L1374.76 1312.55 L1377.26 1312.68 L1379.77 1312.81" fill="none" stroke="#0072b2" stroke-width="2.2"/>
<rect x="853" y="850" width="552" height="543" fill="none" stroke="#1a1a1a" stroke-width="2"/>
<line x1="845" y1="1368.8" x2="853" y2="1368.8" stroke="#1a1a1a" stroke-width="1.7"/>
<text x="837.5" y="1376.3" text-anchor="end" font-size="21">0</text>
<line x1="845" y1="1287.55" x2="853" y2="1287.55" stroke="#1a1a1a" stroke-width="1.7"/>
<text x="837.5" y="1295.05" text-anchor="end" font-size="21">10</text>
<line x1="845" y1="1206.3" x2="853" y2="1206.3" stroke="#1a1a1a" stroke-width="1.7"/>
<text x="837.5" y="1213.8" text-anchor="end" font-size="21">20</text>
<line x1="845" y1="1125.05" x2="853" y2="1125.05" stroke="#1a1a1a" stroke-width="1.7"/>
<text x="837.5" y="1132.55" text-anchor="end" font-size="21">30</text>
<line x1="845" y1="1043.8" x2="853" y2="1043.8" stroke="#1a1a1a" stroke-width="1.7"/>
<text x="837.5" y="1051.3" text-anchor="end" font-size="21">40</text>
<line x1="845" y1="962.55" x2="853" y2="962.55" stroke="#1a1a1a" stroke-width="1.7"/>
<text x="837.5" y="970.05" text-anchor="end" font-size="21">50</text>
<line x1="845" y1="881.3" x2="853" y2="881.3" stroke="#1a1a1a" stroke-width="1.7"/>
<text x="837.5" y="888.8" text-anchor="end" font-size="21">60</text>
<line x1="878.5" y1="1393" x2="878.5" y2="1401" stroke="#1a1a1a" stroke-width="1.7"/>
<text x="878.5" y="1425.5" text-anchor="middle" font-size="21">0</text>
<line x1="1030.4" y1="1393" x2="1030.4" y2="1401" stroke="#1a1a1a" stroke-width="1.7"/>
<text x="1030.4" y="1425.5" text-anchor="middle" font-size="21">5</text>
<line x1="1182.3" y1="1393" x2="1182.3" y2="1401" stroke="#1a1a1a" stroke-width="1.7"/>
<text x="1182.3" y="1425.5" text-anchor="middle" font-size="21">10</text>
<line x1="1334.2" y1="1393" x2="1334.2" y2="1401" stroke="#1a1a1a" stroke-width="1.7"/>
<text x="1334.2" y="1425.5" text-anchor="middle" font-size="21">15</text>
<text x="1129" y="1454.2" text-anchor="middle" font-size="21">νSL (kHz)</text>
<text transform="translate(802.2 1121.7) rotate(-90)" text-anchor="middle" font-size="21">R1rho (s<tspan font-size="12.5" dy="-6.5" letter-spacing="0.6">−1</tspan><tspan dy="6.5">)</tspan></text>
<rect x="1152.8" y="859.1" width="243.4" height="117.2" fill="#fff" stroke="#333" stroke-width="2"/>
<circle cx="1177.2" cy="883.9" r="4.8" fill="#e69f00"/>
<line x1="1162.4" y1="918" x2="1192.3" y2="918" stroke="#0072b2" stroke-width="2.2"/>
<line x1="1162.4" y1="952.3" x2="1192.3" y2="952.3" stroke="#009e73" stroke-width="2.6" stroke-dasharray="7 5"/>
<text x="1200.3" y="891" font-size="21">Exponential fits</text>
<text x="1200.3" y="925" font-size="21">Global fit</text>
<text x="1200.3" y="959.3" font-size="21">No exchange model</text>
<text x="1542" y="206.7" text-anchor="middle" font-size="21">Series:</text>
<rect x="1670.6" y="190.9" width="224.8" height="15.3" rx="7.65" fill="#ededed"/>
<circle cx="1678.5" cy="198.6" r="7.6" fill="#4a78d8"/>
<text x="1542" y="269.8" text-anchor="middle" font-size="21">Integration width (ppm):</text>
<rect x="1679.8" y="244.5" width="74.3" height="35.6" rx="7" fill="#fff" stroke="#c9c9c9" stroke-width="1.6"/>
<text x="1686.3" y="270" font-size="21">0.1</text>
<rect x="1782.3" y="237.8" width="105.7" height="47.7" rx="6" fill="#efefef"/>
<text x="1835.2" y="270" text-anchor="middle" font-size="21">Optimise</text>
<text x="1542" y="338.7" text-anchor="middle" font-size="21">Peak position (ppm):</text>
<rect x="1670.8" y="313.7" width="224.6" height="35.8" rx="7" fill="#fff" stroke="#c9c9c9" stroke-width="1.6"/>
<text x="1676.2" y="338.7" font-size="21" fill="#000">-62.94</text>
<text x="1542" y="402.7" text-anchor="middle" font-size="21">Noise position (ppm):</text>
<rect x="1670.8" y="377.9" width="224.6" height="35.8" rx="7" fill="#fff" stroke="#c9c9c9" stroke-width="1.6"/>
<text x="1676.2" y="402.7" font-size="21" fill="#000">-64.47</text>
<text x="1542" y="466.2" text-anchor="middle" font-size="21">Initial I0:</text>
<rect x="1670.8" y="440.9" width="224.6" height="35.8" rx="7" fill="#fff" stroke="#c9c9c9" stroke-width="1.6"/>
<text x="1676.2" y="466.2" font-size="21" fill="#8a8a8a">53.5</text>
<text x="1542" y="530.1" text-anchor="middle" font-size="21">Initial R2,0 (s<tspan font-size="12.5" dy="-6.5" letter-spacing="0.6">−1</tspan><tspan dy="6.5">):</tspan></text>
<rect x="1670.8" y="504.5" width="224.6" height="35.8" rx="7" fill="#fff" stroke="#c9c9c9" stroke-width="1.6"/>
<text x="1676.2" y="530.1" font-size="21" fill="#000">5.0</text>
<text x="1542" y="592.9" text-anchor="middle" font-size="21">Initial Rex (s<tspan font-size="12.5" dy="-6.5" letter-spacing="0.6">−1</tspan><tspan dy="6.5">):</tspan></text>
<rect x="1670.8" y="567.5" width="224.6" height="35.8" rx="7" fill="#fff" stroke="#c9c9c9" stroke-width="1.6"/>
<text x="1676.2" y="592.9" font-size="21" fill="#000">30.0</text>
<text x="1542" y="656.6" text-anchor="middle" font-size="21">Initial kex (s<tspan font-size="12.5" dy="-6.5" letter-spacing="0.6">−1</tspan><tspan dy="6.5">):</tspan></text>
<rect x="1670.8" y="631.7" width="224.6" height="35.8" rx="7" fill="#fff" stroke="#c9c9c9" stroke-width="1.6"/>
<text x="1676.2" y="656.6" font-size="21" fill="#000">8103.1</text>
<text x="1542" y="719.6" text-anchor="middle" font-size="21">Δδ stdev (ppm):</text>
<rect x="1670.8" y="694.9" width="224.6" height="35.8" rx="7" fill="#fff" stroke="#c9c9c9" stroke-width="1.6"/>
<text x="1676.2" y="719.6" font-size="21" fill="#000">2.0</text>
<text x="1659.7" y="829" text-anchor="middle" font-size="21">Exchange model results:</text>
<text x="1659.7" y="853.4" text-anchor="middle" font-size="21">I<tspan dy="-2">₀</tspan><tspan dy="2"> = 52.9 ± 0.17</tspan></text>
<text x="1659.7" y="877.7" text-anchor="middle" font-size="21">R<tspan dy="-2">₂₀</tspan><tspan dy="2"> = 5.26 ± 0.18 s</tspan><tspan font-size="12.5" dy="-6.5" letter-spacing="0.6">−1</tspan><tspan dy="6.5"></tspan></text>
<text x="1659.7" y="902.3" text-anchor="middle" font-size="21">R<tspan dy="-2">ₑₓ</tspan><tspan dy="2"> = 53.4 ± 0.75 s</tspan><tspan font-size="12.5" dy="-6.5" letter-spacing="0.6">−1</tspan><tspan dy="6.5"></tspan></text>
<text x="1659.7" y="926.8" text-anchor="middle" font-size="21">K = 18400.0 ± 350.0 s<tspan font-size="12.5" dy="-6.5" letter-spacing="0.6">−1</tspan><tspan dy="6.5"></tspan></text>
<text x="1659.7" y="951.2" text-anchor="middle" font-size="21">k<tspan dy="-2">ₑₓ</tspan><tspan dy="2"> = 17000.0 ± 2200.0 s</tspan><tspan font-size="12.5" dy="-6.5" letter-spacing="0.6">−1</tspan><tspan dy="6.5"></tspan></text>
<text x="1659.7" y="1000.5" text-anchor="middle" font-size="21">No-exchange model results:</text>
<text x="1659.7" y="1025" text-anchor="middle" font-size="21">R<tspan dy="-2">₂₀</tspan><tspan dy="2"> = 18.7 ± 1.3 s</tspan><tspan font-size="12.5" dy="-6.5" letter-spacing="0.6">−1</tspan><tspan dy="6.5"></tspan></text>
<text x="1659.7" y="1073.7" text-anchor="middle" font-size="21">Model comparison:</text>
<text x="1659.7" y="1098.3" text-anchor="middle" font-size="21">F-statistic = 9032.52; p-value = 0.0</text>
<text x="1659.7" y="1122.6" text-anchor="middle" font-size="21">Exchange significant (p <tspan font-size="25">‹</tspan> 0.05)</text>
<text x="1659.7" y="1173.7" text-anchor="middle" font-size="21">Working directory:</text>
<text x="1659.7" y="1198.3" text-anchor="middle" font-size="21">/Users/chris/git/NMRAnalysis.jl</text>
<text x="1470.4" y="1256.3" font-size="21">Output folder:</text>
<rect x="1624.8" y="1231.8" width="223.7" height="35" rx="7" fill="#fff" stroke="#c9c9c9" stroke-width="1.6"/>
<text x="1630.2" y="1256.3" font-size="21">out</text>
<rect x="1590" y="1293.9" width="139.8" height="47.8" rx="6" fill="#efefef"/>
<text x="1659.9" y="1324.8" text-anchor="middle" font-size="21">Save results</text>
</svg></body></html>
